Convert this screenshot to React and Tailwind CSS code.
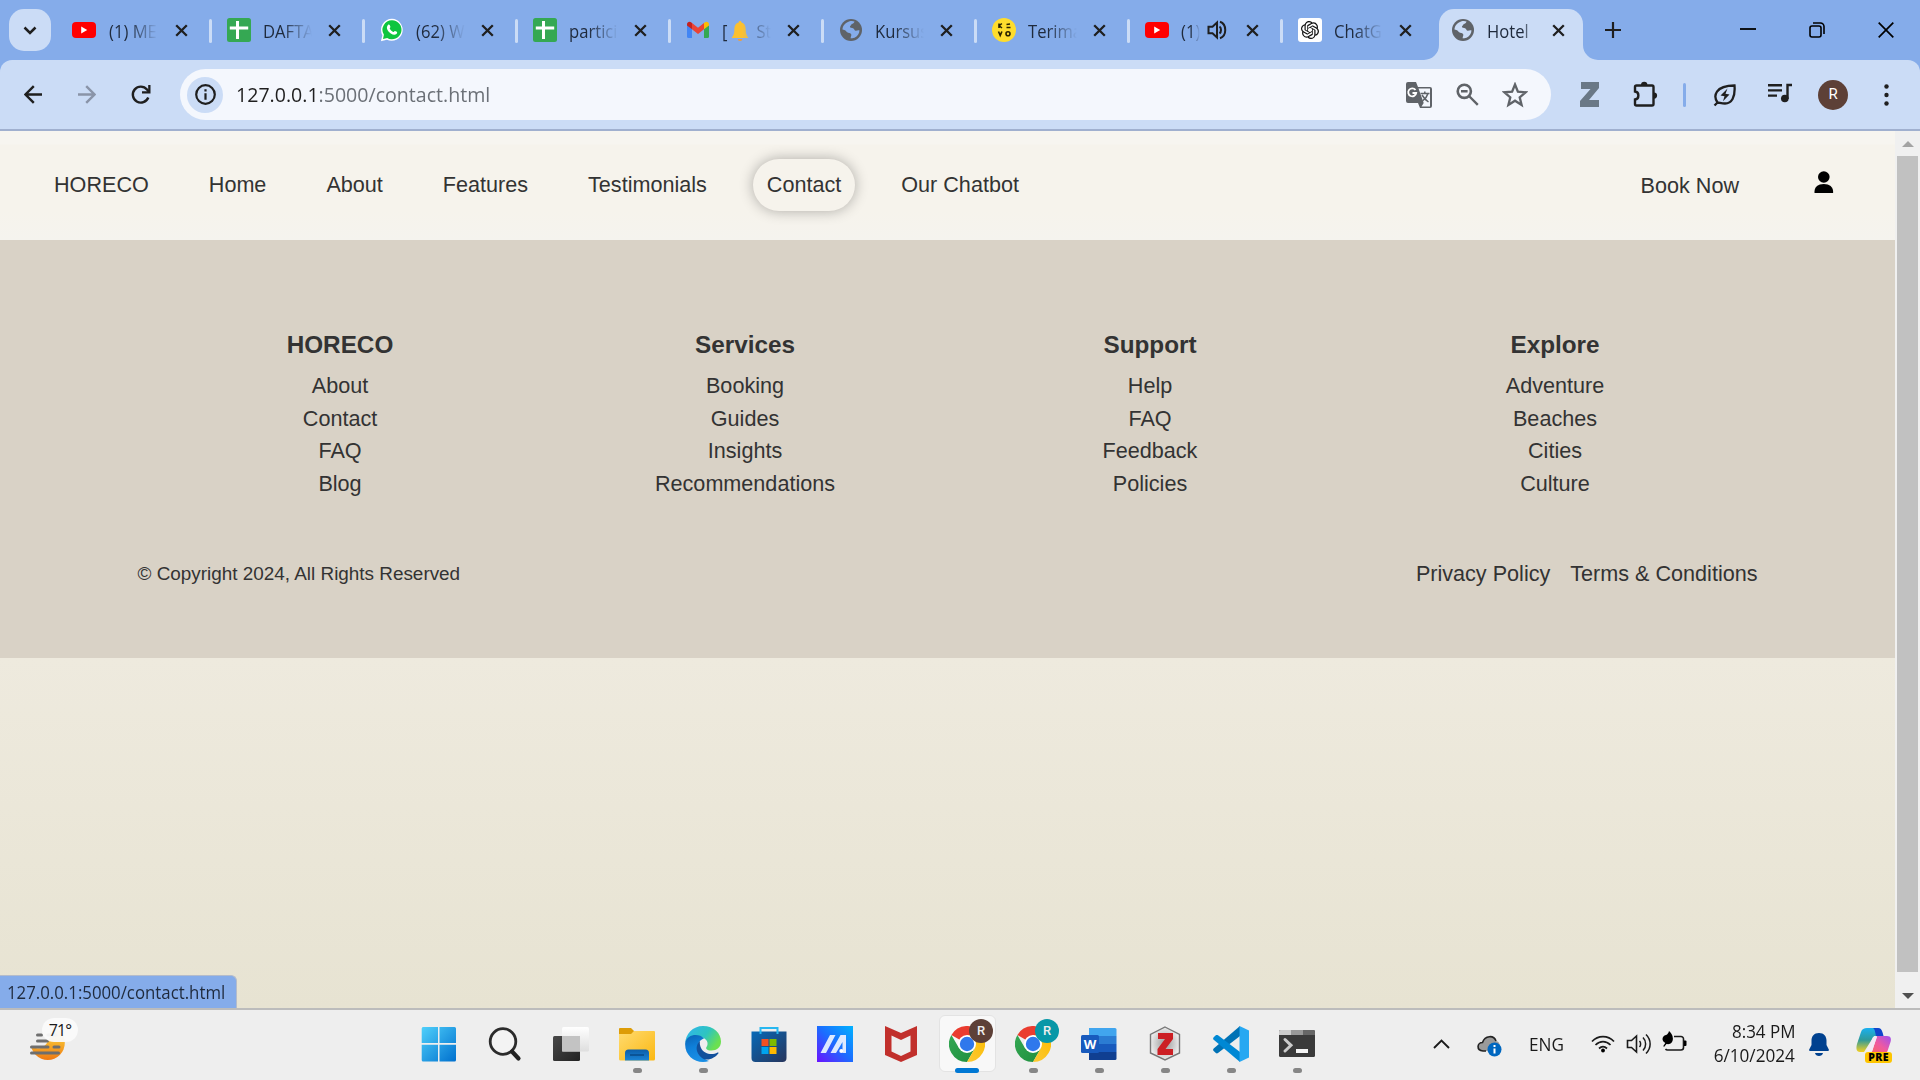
import React from "react";

const segoe = "font-['Open_Sans','Noto_Sans',sans-serif]";

const Close = () => (
  <svg width="13" height="13" viewBox="0 0 13 13" className="shrink-0"><path d="M1.2 1.2 11.8 11.8M11.8 1.2 1.2 11.8" stroke="#1f1f1f" strokeWidth="2.3" /></svg>
);
const YouTube = () => (
  <svg width="24" height="24" viewBox="0 0 24 24"><rect y="4" width="24" height="16" rx="4" fill="#f00" /><path d="M9.2 8.5v7l6-3.5z" fill="#fff" /></svg>
);
const Sheets = () => (
  <svg width="24" height="24" viewBox="0 0 24 24"><rect width="24" height="24" rx="2.5" fill="#35a853" /><path d="M10.500 3v18M2.800 10h18.400" stroke="#fff" strokeWidth="3" /></svg>
);
const WhatsApp = () => (
  <svg width="24" height="24" viewBox="0 0 24 24"><path d="M12 .8A11 11 0 0 0 2.400 17.200L.9 23.200l6-1.500A11 11 0 1 0 12 .8z" fill="#fff" /><path d="M12 2.300a9.500 9.500 0 0 0-8.100 14.500L3 21l4.200-1a9.500 9.500 0 1 0 4.800-17.700z" fill="#0ec53f" /><path d="M8 7c.5-.6 1.400-.6 1.700.1l.7 1.700c.2.5-.9 1.300-.7 1.800.7 1.500 1.900 2.700 3.500 3.400.6.200 1.200-1.300 1.800-1.100l1.800.9c.7.4.3 1.700-.4 2.200-1.500 1.100-3.600.7-5.600-.6-1.700-1.100-3.100-2.700-3.700-4.500C6.600 9.400 7.200 7.800 8 7z" fill="#fff" /></svg>
);
const Gmail = () => (
  <svg width="24" height="24" viewBox="0 0 24 24"><path d="M1 7v11.500A1.500 1.500 0 0 0 2.500 20H6V10.500z" fill="#4285f4" /><path d="M18 10.500V20h3.500a1.500 1.500 0 0 0 1.500-1.500V7z" fill="#34a853" /><path d="M1 6.500c0-2.500 2.600-3.400 4.400-2L6 5v6.300L1 7.500z" fill="#c5221f" /><path d="M23 6.500c0-2.500-2.600-3.400-4.400-2L18 5v6.300l5-3.800z" fill="#fbbc04" /><path d="M6 5l6 4.700L18 5v6.300l-6 4.600-6-4.600z" fill="#ea4335" /></svg>
);
const Globe = ({ land = "#85acea" }) => (
  <svg width="24" height="24" viewBox="0 0 24 24"><circle cx="12" cy="12" r="11" fill="#5f6368" /><path d="M10 3.500c2-.7 4-.6 5.500 0-.4 1.600-1.500 2.200-2.800 2.500-.3 1.400-1.600 1.600-1.800 2.700.1 1.200 1.900 1 3.200 1.500 1.500.7 1.200 2.400 2.700 2.600 1 .1 2-.8 3.700-.3-.2 3-2 6-5 7.300-1.700.6-2.500.6-3.700.6-.5-1.500.8-2.300.5-3.800-.5-1.800-3-1.300-4.500-2.600-1-1-1.200-2-4.300-2.400 0-3 2-6.600 6.500-8.100z" fill={land} /></svg>
);
const Smile = () => (
  <svg width="24" height="24" viewBox="0 0 24 24"><circle cx="12" cy="12" r="12" fill="#ffdd2d" /><g fill="none" stroke="#2a2300" strokeWidth="1.600"><path d="M7 5.500v4.500M7 8 9.800 5.500M7.500 8l2.500 2M14.500 6.500l3.500-.5M14.500 9.500h4M6.500 13.500l1.700 4 1.700-4" /><circle cx="16" cy="15.700" r="2" /></g></svg>
);
const OpenAI = () => (
  <svg width="24" height="24" viewBox="0 0 24 24"><rect width="24" height="24" rx="3" fill="#fff" /><g transform="translate(3 3) scale(.75)"><path fill="#111" d="M22.2819 9.8211a5.9847 5.9847 0 0 0-.5157-4.9108 6.0462 6.0462 0 0 0-6.5098-2.9A6.0651 6.0651 0 0 0 4.9807 4.1818a5.9847 5.9847 0 0 0-3.9977 2.9 6.0462 6.0462 0 0 0 .7427 7.0966 5.98 5.98 0 0 0 .511 4.9107 6.051 6.051 0 0 0 6.5146 2.9001A5.9847 5.9847 0 0 0 13.2599 24a6.0557 6.0557 0 0 0 5.7718-4.2058 5.9894 5.9894 0 0 0 3.9977-2.9001 6.0557 6.0557 0 0 0-.7475-7.0729zm-9.022 12.6081a4.4755 4.4755 0 0 1-2.8764-1.0408l.1419-.0804 4.7783-2.7582a.7948.7948 0 0 0 .3927-.6813v-6.7369l2.02 1.1686a.071.071 0 0 1 .038.052v5.5826a4.504 4.504 0 0 1-4.4945 4.4944zm-9.6607-4.1254a4.4708 4.4708 0 0 1-.5346-3.0137l.142.0852 4.783 2.7582a.7712.7712 0 0 0 .7806 0l5.8428-3.3685v2.3324a.0804.0804 0 0 1-.0332.0615L9.74 19.9502a4.4992 4.4992 0 0 1-6.1408-1.6464zM2.3408 7.8956a4.485 4.485 0 0 1 2.3655-1.9728V11.6a.7664.7664 0 0 0 .3879.6765l5.8144 3.3543-2.0201 1.1685a.0757.0757 0 0 1-.071 0l-4.8303-2.7865A4.504 4.504 0 0 1 2.3408 7.872zm16.5963 3.8558L13.1038 8.364 15.1192 7.2a.0757.0757 0 0 1 .071 0l4.8303 2.7913a4.4944 4.4944 0 0 1-.6765 8.1042v-5.6772a.79.79 0 0 0-.407-.667zm2.0107-3.0231l-.142-.0852-4.7735-2.7818a.7759.7759 0 0 0-.7854 0L9.409 9.2297V6.8974a.0662.0662 0 0 1 .0284-.0615l4.8303-2.7866a4.4992 4.4992 0 0 1 6.6802 4.66zM8.3065 12.863l-2.02-1.1638a.0804.0804 0 0 1-.038-.0567V6.0742a4.4992 4.4992 0 0 1 7.3757-3.4537l-.142.0805L8.704 5.459a.7948.7948 0 0 0-.3927.6813zm1.0976-2.3654l2.602-1.4998 2.6069 1.4998v2.9994l-2.5974 1.4997-2.6067-1.4997Z" /></g></svg>
);
const Bell = () => (
  <svg width="18" height="20" viewBox="0 0 18 20" className="mx-[4px] inline-block align-[-3px]"><path d="M9 0c1 0 1.500.7 1.500 1.600C14 2.500 15 5.500 15 9c0 3.500 1 5.500 3 8H0c2-2.500 3-4.500 3-8 0-3.500 1-6.500 4.500-7.400C7.500.7 8 0 9 0z" fill="#fcc02e" /><path d="M6.500 18h5a2.500 2 0 0 1-5 0z" fill="#f29d38" /></svg>
);
const Speaker = () => (
  <svg width="20" height="20" viewBox="0 0 20 20" className="shrink-0"><path d="M1.500 6.700v6.600h4L10 17.500v-15L5.500 6.700z" fill="none" stroke="#1f1f1f" strokeWidth="2" /><path d="M12.500 6.500c2 1.500 2 5.500 0 7M13 1.800c7 2.500 7 13.900 0 16.400" fill="none" stroke="#1f1f1f" strokeWidth="2" /></svg>
);

const tabs = [
  { icon: <YouTube />, title: "(1) ME" },
  { icon: <Sheets />, title: "DAFTA" },
  { icon: <WhatsApp />, title: "(62) W" },
  { icon: <Sheets />, title: "partici" },
  { icon: <Gmail />, title: <>[<Bell /> St</> },
  { icon: <Globe />, title: "Kursus" },
  { icon: <Smile />, title: "Terima" },
  { icon: <YouTube />, title: "(1)", sound: true },
  { icon: <OpenAI />, title: "ChatG" },
];

function TabBody({ icon, title, sound, last, first }) {
  return (
    <>
      <span className={first ? "-ml-[2px] mr-[1px] h-6 w-6 shrink-0" : "h-6 w-6 shrink-0"}>{icon}</span>
      <span className={sound
        ? "ml-[12px] mt-[2px] w-[19px] overflow-hidden whitespace-nowrap [mask-image:linear-gradient(to_right,#000_50%,transparent)]"
        : last ? "ml-[12px] mt-[2px] w-[44px] overflow-hidden whitespace-nowrap [mask-image:linear-gradient(to_right,#000_85%,transparent)]"
        : "ml-[12px] mt-[2px] w-[49px] overflow-hidden whitespace-nowrap [mask-image:linear-gradient(to_right,#000_40%,transparent)]"}>
        <span className="inline-block origin-left scale-x-[0.95]">{title}</span>
      </span>
      {sound && <span className="ml-[7px]"><Speaker /></span>}
    </>
  );
}

function TabStrip() {
  return (
    <div className={`flex h-[60px] bg-[#85acea] text-[17.500px] leading-6 text-[#1f2a3c] ${segoe}`}>
      <div className="ml-[9px] mt-[9px] flex h-[42px] w-[42px] shrink-0 items-center justify-center rounded-[15px] bg-[#cbdcf6]">
        <svg width="14" height="9" viewBox="0 0 14 9"><path d="M1.500 1.500 7 7l5.500-5.500" fill="none" stroke="#1f1f1f" strokeWidth="2.500" /></svg>
      </div>
      <div className="ml-[8px] flex shrink-0">
        {tabs.map((t, i) => (
          <div key={i} className="relative flex h-[60px] w-[153px] items-center pl-[15px]">
            <TabBody {...t} first={i === 0} />
            <span className="absolute left-[116px] top-[24px]"><Close /></span>
            <span className="absolute left-[150px] top-[19px] h-6 w-[3px] rounded-full bg-[#cbdcf6] data-[hide=true]:hidden" data-hide={i === 8} />
          </div>
        ))}
      </div>
      <div className="relative ml-[3px] mt-[9px] flex h-[51px] w-[144px] shrink-0 items-center rounded-t-[15px] bg-[#cbdcf6] pb-[9px] pl-[12px]">
        <svg className="absolute bottom-0 left-[-15px]" width="15" height="15"><path d="M15 0v15H0A15 15 0 0 0 15 0z" fill="#cbdcf6" /></svg>
        <svg className="absolute bottom-0 right-[-15px]" width="15" height="15"><path d="M0 0v15h15A15 15 0 0 1 0 0z" fill="#cbdcf6" /></svg>
        <TabBody icon={<Globe land="#cbdcf6" />} title="Hotel" last />
        <span className="absolute left-[113px] top-[15px]"><Close /></span>
      </div>
      <svg className="ml-[22px] mt-[22px]" width="16" height="16"><path d="M8 0v16M0 8h16" stroke="#1f1f1f" strokeWidth="2.200" /></svg>
      <div className="ml-auto mr-[26px] flex items-center gap-[53px]">
        <svg width="16" height="16"><path d="M0 7h16" stroke="#000" strokeWidth="1.800" /></svg>
        <svg width="16" height="16"><rect x="1" y="4" width="11" height="11" rx="2" fill="none" stroke="#000" strokeWidth="1.600" /><path d="M4 1h7.500a3.500 3.500 0 0 1 3.500 3.500V12" fill="none" stroke="#000" strokeWidth="1.600" /></svg>
        <svg width="16" height="16"><path d="M.7.7 15.300 15.300M15.300.7.7 15.300" stroke="#000" strokeWidth="1.700" /></svg>
      </div>
    </div>
  );
}

function Toolbar() {
  return (
    <div className="bg-[#85acea]">
      <div className={`flex h-[71px] items-center rounded-t-[12px] border-b-2 border-[#a0b0cf] bg-[#cbdcf6] ${segoe}`}>
        <svg className="ml-[24px]" width="19" height="19" viewBox="0 0 19 19"><path d="M18 9.500H2M9.800 1.200 1.500 9.500l8.300 8.300" fill="none" stroke="#1f1f1f" strokeWidth="2.400" /></svg>
        <svg className="ml-[34px]" width="19" height="19" viewBox="0 0 19 19"><path d="M1 9.500h16M9.200 1.200l8.300 8.300-8.300 8.300" fill="none" stroke="#8a94a8" strokeWidth="2.400" /></svg>
        <svg className="ml-[35px]" width="20" height="20" viewBox="0 0 20 20"><path d="M17.300 12.500A8 8 0 1 1 16 4.500l2 2.500" fill="none" stroke="#1f1f1f" strokeWidth="2.400" /><path d="M19.500 0v8.500H11V6.200h6.200V0z" fill="#1f1f1f" /></svg>
        <div className="ml-[29px] flex h-[51px] w-[1371px] items-center rounded-full bg-[#f4f7fd] pl-[7px]">
          <div className="flex h-[36px] w-[36px] items-center justify-center rounded-full bg-[#cbdcf6]">
            <svg width="21" height="21" viewBox="0 0 21 21"><circle cx="10.500" cy="10.500" r="9.300" fill="none" stroke="#1f1f1f" strokeWidth="2.200" /><path d="M10.500 9.300v6.400M10.500 5.300v2.300" stroke="#1f1f1f" strokeWidth="2.200" /></svg>
          </div>
          <div className="mb-[2px] ml-[13px] w-[260px] whitespace-nowrap text-[20.500px] leading-8 text-[#6b7077]"><span className="inline-block origin-left scale-x-[0.955]"><span className="text-[#1f1f1f]">127.0.0.1</span>:5000/contact.html</span></div>
          <svg className="ml-auto" width="26" height="26" viewBox="0 0 26 26"><path d="M2 0h8l2 5h12a2 2 0 0 1 2 2v17a2 2 0 0 1-2 2H14l-2-5H2a2 2 0 0 1-2-2V2a2 2 0 0 1 2-2z" fill="#5f6368" /><path d="M12.500 6.500H24v18h-8.500l2.200-3.500z" fill="#f4f7fd" /><path d="M14.500 11.500h9M18.800 9.500v2M22 11.500c-1 3.500-3 5.500-5.500 7.500M16 13c1.500 2.500 3.500 5 6.500 7" stroke="#5f6368" strokeWidth="1.500" fill="none" /><path d="M9.500 8A4 4 0 1 0 10.200 11H6.500" stroke="#fff" strokeWidth="1.800" fill="none" /></svg>
          <svg className="ml-[24px]" width="23" height="23" viewBox="0 0 23 23"><circle cx="8.300" cy="8.300" r="6.600" fill="none" stroke="#5f6368" strokeWidth="2.600" /><path d="M13 13l8.800 8.800M5 8.300h6.600" stroke="#5f6368" strokeWidth="2.400" /></svg>
          <svg className="ml-[23px] mr-[23px]" width="26" height="26" viewBox="0 0 26 26"><path d="M13 2.500l2.900 7.200 7.700.6-5.900 5 1.900 7.600-6.600-4.200-6.600 4.200 1.900-7.600-5.900-5 7.700-.6z" fill="none" stroke="#5f6368" strokeWidth="2.300" /></svg>
        </div>
        <svg className="ml-[29px]" width="20" height="25" viewBox="0 0 20 25"><path d="M1 0h18v6L9 18h10v7H0v-6L10.500 7H1z" fill="#6a7886" /></svg>
        <svg className="ml-[32px] mb-[3px]" width="27" height="27" viewBox="0 0 27 27"><path d="M4.500 5.500H20a1.500 1.500 0 0 1 1.500 1.500v17a1.500 1.500 0 0 1-1.500 1.500H4.500A1.500 1.500 0 0 1 3 24v-4.500c4.500-.5 4.500-7.500 0-8V7a1.500 1.500 0 0 1 1.500-1.500z" fill="none" stroke="#1f1f1f" strokeWidth="2.400" /><path d="M9 5a3 3 0 1 1 6.400 0zM22 12.500a3 3 0 1 1 0 6.200z" fill="#1f1f1f" /></svg>
        <span className="ml-[24px] h-6 w-[3px] rounded-full bg-[#85acea]" />
        <svg className="ml-[27px]" width="24" height="24" viewBox="0 0 24 24"><path d="M1.500 22.500 4.500 19.500M4.500 19.500C0 13 2 2.500 21.500 2.500c1 12-3 18-9.500 18-3 0-5.500-.8-7.500-1z" fill="none" stroke="#1f1f1f" strokeWidth="2.300" /><path d="M14.500 5.500 7.500 12.500l4 .8-1.500 5 6.500-6.800-4-.8z" fill="#1f1f1f" /></svg>
        <svg className="ml-[31px] mb-[3px]" width="25" height="20" viewBox="0 0 25 20"><path d="M0 2.200h14M0 7.400h14M0 12.600h9M19.500 16V2H24" fill="none" stroke="#1f1f1f" strokeWidth="2.400" /><circle cx="16.800" cy="15.500" r="3.800" fill="#1f1f1f" /></svg>
        <div className="ml-[25px] flex h-[30px] w-[30px] items-center justify-center rounded-full bg-[#5d4037] font-[Roboto,sans-serif] text-[15px] text-white">R</div>
        <svg className="ml-[36px]" width="5" height="22"><g fill="#1f1f1f"><circle cx="2.500" cy="2.500" r="2.200" /><circle cx="2.500" cy="11" r="2.200" /><circle cx="2.500" cy="19.500" r="2.200" /></g></svg>
      </div>
    </div>
  );
}

const columns = [
  ["HORECO", "About", "Contact", "FAQ", "Blog"],
  ["Services", "Booking", "Guides", "Insights", "Recommendations"],
  ["Support", "Help", "FAQ", "Feedback", "Policies"],
  ["Explore", "Adventure", "Beaches", "Cities", "Culture"],
];

function Page() {
  return (
    <div className="flex h-[877px] bg-[#f0f0f0] font-['Liberation_Sans',Arial,sans-serif] text-[21.600px] text-[#333]">
      <div className="relative flex w-[1895px] flex-col">
        <nav className="flex h-[109px] items-start bg-[linear-gradient(#f7f5f0_0,#f7f5f0_13px,#f6f3ec_14px,#f6f3ec_80px,#f5f3ee_100%)] pl-[40.500px] pt-[28px] leading-[52px]">
          {["HORECO", "Home", "About", "Features", "Testimonials", "Contact", "Our Chatbot"].map((n) => (
            <a key={n} className={n === "Contact" ? "mr-[33px] h-[52px] rounded-[27px] bg-[#f6f3ec] px-[13.500px] shadow-[0_0_14px_rgba(0,0,0,0.3)]" : "mr-[33px] h-[52px] px-[13.500px]"}>{n}</a>
          ))}
          <a className="ml-auto mt-[1px]">Book Now</a>
          <svg className="ml-[75px] mr-[61px] mt-[12px]" width="20" height="22" viewBox="0 0 20 22"><circle cx="9.800" cy="6" r="5.800" /><path d="M.5 22v-1.500C.5 16 4 13 9.800 13s9.300 3 9.300 7.500V22z" /></svg>
        </nav>
        <footer className="flex h-[418px] flex-col bg-[#d9d2c6] px-[137.500px] pt-[88px]">
          <div className="grid grid-cols-4 text-center leading-[32.700px]">
            {columns.map(([h, ...links]) => (
              <div key={h}>
                <h3 className="mb-[8px] text-[24.300px] font-bold leading-[34px]">{h}</h3>
                {links.map((l) => <div key={l}>{l}</div>)}
              </div>
            ))}
          </div>
          <div className="mt-[60px] flex items-center justify-between leading-[26px]">
            <span className="text-[18.900px]">© Copyright 2024, All Rights Reserved</span>
            <span className="flex gap-[20px]"><a>Privacy Policy</a><a>Terms &amp; Conditions</a></span>
          </div>
        </footer>
        <div className="flex-1 bg-[linear-gradient(#eeeade,#e7e3d2)]" />
        <div className={`absolute bottom-0 left-0 h-[33px] w-[237px] whitespace-nowrap rounded-tr-[6px] border-r border-t border-[#b4bccb] bg-[#85acea] pl-[7px] text-[17.500px] leading-[32px] text-[#1f2a3c] ${segoe}`}><span className="inline-block origin-left scale-x-[0.96]">127.0.0.1:5000/contact.html</span></div>
      </div>
      <div className="flex w-[25px] flex-col items-center">
        <svg className="mt-[10px]" width="12" height="6"><path d="M0 6 6 0l6 6z" fill="#a3a3a3" /></svg>
        <div className="mt-[9px] h-[816px] w-[21px] bg-[#c1c1c1]" />
        <svg className="mt-[21px]" width="12" height="6"><path d="M0 0h12L6 6z" fill="#505050" /></svg>
      </div>
    </div>
  );
}

function ChromeLogo({ color, id }) {
  return (
    <div className="relative h-9 w-9">
      <svg width="36" height="36" viewBox="0 0 36 36">
        <defs>
          <linearGradient id={`${id}g`} x1="0" y1="0" x2="1" y2="1"><stop offset="0" stopColor="#34a853" /><stop offset="1" stopColor="#1e8e3e" /></linearGradient>
          <linearGradient id={`${id}y`} x1="0" y1="1" x2="1" y2="0"><stop offset="0" stopColor="#fcc934" /><stop offset="1" stopColor="#fbbc04" /></linearGradient>
        </defs>
        <path d="M18 18 2.400 9A18 18 0 0 1 33.600 9H18z" fill="#ea3c2f" />
        <path d="M2.400 9A18 18 0 0 0 18 36l7.800-13.500L10.200 22.500z" fill={`url(#${id}g)`} />
        <path d="M33.600 9A18 18 0 0 1 18 36l7.800-13.500L18 9z" fill={`url(#${id}y)`} />
        <circle cx="18" cy="18" r="9" fill="#fff" /><circle cx="18" cy="18" r="7.200" fill="#2f78ec" />
      </svg>
      <div className="absolute left-[20px] top-[-7px] flex h-6 w-6 items-center justify-center rounded-full font-[Roboto,sans-serif] text-[13px] font-medium text-[#eee]" style={{ backgroundColor: color }}>R</div>
    </div>
  );
}

const apps = [
  { icon: <svg width="36" height="36" viewBox="0 0 36 36"><defs><linearGradient id="win" x1="0" y1="0" x2="1" y2="1"><stop offset="0" stopColor="#4fd0fb" /><stop offset="1" stopColor="#0070ce" /></linearGradient></defs><path d="M2 1h15v16H.7V2.500A1.500 1.500 0 0 1 2 1zm16.500 0h15A1.500 1.500 0 0 1 35 2.500V17H18.500zM.7 18.700H17V35.500H2.200A1.500 1.500 0 0 1 .7 34zm17.800 0H35V34a1.500 1.500 0 0 1-1.500 1.500h-15z" fill="url(#win)" /></svg> },
  { icon: <svg width="36" height="36" viewBox="0 0 36 36"><circle cx="16" cy="15.500" r="12.800" fill="#f3f3f3" stroke="#2b2b2b" strokeWidth="2.800" /><path d="M25 25.500l6.500 7" stroke="#222" strokeWidth="4.200" strokeLinecap="round" /></svg> },
  { icon: <svg width="36" height="36" viewBox="0 0 36 36"><defs><linearGradient id="tv" x1="0" y1="0" x2="0" y2="1"><stop offset="0" stopColor="#fff" /><stop offset="1" stopColor="#dedede" /></linearGradient><linearGradient id="td" x1="0" y1="0" x2="1" y2="1"><stop offset="0" stopColor="#484848" /><stop offset="1" stopColor="#222" /></linearGradient></defs><rect y="10" width="27" height="25" rx="1.500" fill="url(#td)" /><rect x="9" y="1" width="27" height="24.500" rx="1.500" fill="url(#tv)" /><path d="M9 10h18v15.500H9z" fill="#c3c3c3" /></svg> },
  { dot: true, icon: <svg width="36" height="36" viewBox="0 0 36 36"><defs><linearGradient id="fo" x1="0" y1="0" x2="1" y2="1"><stop offset="0" stopColor="#ffdb70" /><stop offset="1" stopColor="#fbb812" /></linearGradient><linearGradient id="fb" x1="0" y1="0" x2="0" y2="1"><stop offset="0" stopColor="#0c5da8" /><stop offset="1" stopColor="#1a84d6" /></linearGradient></defs><path d="M0 3a1 1 0 0 1 1-1h11l3.500 3.500L12 9H0z" fill="#dd9c07" /><path d="M0 8h12l3-3h20a1 1 0 0 1 1 1v27a1.500 1.500 0 0 1-1.500 1.500h-33A1.500 1.500 0 0 1 0 33z" fill="url(#fo)" /><path d="M6 34.500V27a3.500 3.500 0 0 1 3.500-3.500h17A3.500 3.500 0 0 1 30 27v7.500z" fill="url(#fb)" /><path d="M11 29h14" stroke="#0a4d8c" strokeWidth="1.600" /></svg> },
  { dot: true, icon: <svg width="36" height="36" viewBox="0 0 36 36"><defs><linearGradient id="eg" x1="0" y1="0" x2="1" y2=".5"><stop offset="0" stopColor="#30b4f0" /><stop offset=".6" stopColor="#2ec4c0" /><stop offset="1" stopColor="#6be050" /></linearGradient><linearGradient id="eb" x1="0" y1="0" x2=".3" y2="1"><stop offset="0" stopColor="#0b62b4" /><stop offset=".5" stopColor="#0f80da" /><stop offset="1" stopColor="#1a8ee4" /></linearGradient></defs><path d="M18 0c11 0 18 7.500 18 15.500 0 6-4.500 9-9.500 9-5 0-6-2-5-3.500 2.500-3.500.5-8-4-9.500C9 9 1 12 .3 18 0 8 8 0 18 0z" fill="url(#eg)" /><path d="M.2 17C2 8 14 7 19 12.500c-4 1-6.500 5-6 9.500C14 29 19 33.500 24 35c-12 3.800-24.800-4.500-23.800-18z" fill="url(#eb)" /><path d="M15 15c-5 4.500-4.500 12 2 17 5.500 4 13.500-.5 16.300-4.500.5-.8 0-1.300-.8-1C27 29.500 19 28 16 22c-1-2.500-1.500-4.500-1-7z" fill="#12509c" /></svg> },
  { icon: <svg width="36" height="36" viewBox="0 0 36 36"><defs><linearGradient id="st" x1="0" y1="0" x2="1" y2="1"><stop offset="0" stopColor="#0669b8" /><stop offset="1" stopColor="#27355c" /></linearGradient></defs><path d="M.5 5.500h35V32a4 4 0 0 1-4 4h-27a4 4 0 0 1-4-4z" fill="url(#st)" /><path d="M9.500 8V2h17v6" fill="none" stroke="#27b7f0" strokeWidth="2" /><path d="M10.500 13h7v7h-7z" fill="#f25022" /><path d="M18.500 13h7v7h-7z" fill="#7fba00" /><path d="M10.500 21h7v7h-7z" fill="#00a4ef" /><path d="M18.500 21h7v7h-7z" fill="#ffb900" /></svg> },
  { icon: <svg width="36" height="36" viewBox="0 0 36 36"><defs><linearGradient id="ma" x1="0" y1="1" x2="1" y2="0"><stop offset="0" stopColor="#6a12ff" /><stop offset=".5" stopColor="#1c6cff" /><stop offset="1" stopColor="#00b2ff" /></linearGradient></defs><path d="M0 0h36v36H0z" fill="url(#ma)" /><path d="M13 9h5.500L9 27H3.500zM23.500 9H29v18h-3.500V16L19 27h-5.500z" fill="#dde9ff" /><circle cx="24.300" cy="25" r="2" fill="#fff" /></svg> },
  { icon: <svg width="36" height="36" viewBox="0 0 36 36"><path d="M2 0l16 7 16-7v29l-16 7-16-7zM8.500 9.500v16l9.500 4.500 9.500-4.500v-16L18 14z" fill="#c1302c" fillRule="evenodd" /></svg> },
  { active: true, icon: <ChromeLogo color="#5d4037" id="ca" /> },
  { dot: true, icon: <ChromeLogo color="#0797a7" id="cb" /> },
  { dot: true, icon: <svg width="36" height="36" viewBox="0 0 36 36"><path d="M8 2h26a1.500 1.500 0 0 1 1.500 1.500V10H8z" fill="#41a5ee" /><path d="M8 10h27.500v8H8z" fill="#2b7cd3" /><path d="M8 18h27.500v8H8z" fill="#185abd" /><path d="M8 26h27.500v6.500A1.500 1.500 0 0 1 34 34H8z" fill="#103f91" /><rect y="9" width="18" height="18" rx="1.500" fill="#185abd" /><text x="9" y="23" textAnchor="middle" fontFamily="Open Sans, sans-serif" fontWeight="700" fontSize="13" fill="#fff">W</text></svg> },
  { dot: true, icon: <svg width="36" height="36" viewBox="0 0 36 36"><defs><radialGradient id="zo"><stop offset="0" stopColor="#999" /><stop offset="1" stopColor="#ececec" /></radialGradient></defs><path d="M18 1l14.500 7.500v18.500L18 34 3.500 27V8.500z" fill="url(#zo)" stroke="#777" strokeWidth="1.400" /><path d="M11 7h15v6l-7.500 10H26v6H10.500v-6L18 13h-7z" fill="#cc1f24" /></svg> },
  { dot: true, icon: <svg width="36" height="36" viewBox="0 0 36 36"><path d="M27 0v10L5 27c-.8.600-1.600.500-2.200 0L.7 25c-.8-.8-.8-1.800 0-2.600z" fill="#0072b5" /><path d="M27 36V26L5 9.300c-.8-.6-1.600-.5-2.200 0L.7 11.200c-.8.800-.8 1.800 0 2.600z" fill="#0088d4" /><path d="M26.500 0 36 4.500v27L26.500 36z" fill="#27a8f2" /></svg> },
  { dot: true, icon: <svg width="36" height="36" viewBox="0 0 36 36"><rect y="4" width="36" height="27" rx="1.500" fill="#3a3a3a" /><path d="M0 9V5.500A1.500 1.500 0 0 1 1.500 4H12v5z" fill="#ccc" /><path d="M12 4h12v5H12z" fill="#999" /><path d="M24 4h10.500A1.500 1.500 0 0 1 36 5.500V9H24z" fill="#666" /><path d="M6 13.500l6 5.800-6 5.700" fill="none" stroke="#ccc" strokeWidth="3" strokeLinecap="round" /><path d="M17 23h12v4H17z" fill="#f4f4f4" /></svg> },
];

function Taskbar() {
  return (
    <div className={`relative flex h-[72px] border-t-2 border-[#bcbcbc] bg-[#eee] text-[#1a1a1a] ${segoe}`}>
      <div className="relative ml-[30px] mt-[8px] h-[44px] w-[50px]">
        <svg className="absolute left-0 top-[4px]" width="36" height="40" viewBox="0 0 36 40"><defs><linearGradient id="sun" x1="0" y1="0" x2="0" y2="1"><stop offset="0" stopColor="#fbd25e" /><stop offset=".5" stopColor="#f6b22c" /><stop offset="1" stopColor="#f07912" /></linearGradient></defs><circle cx="17.800" cy="21" r="17" fill="url(#sun)" /><path d="M0 0h26c-5 6-3 12-8 19-3 7-10 9-14 6H0z" fill="#eee" /><path d="M7.500 13h4M18 13h8M7.500 19h10M1.500 25H18M24 25h5M1.500 31h27" stroke="#6e6e6e" strokeWidth="3" strokeLinecap="round" /></svg>
        <div className="absolute left-[12px] top-0 flex h-6 w-9 items-center justify-center rounded-full bg-[#fafafa]/95 text-[16px] tracking-[-0.8px]">71°</div>
      </div>
      <div className="ml-[326px] flex">
        {apps.map((a, i) => (
          <div key={i} className="flex w-[66px] flex-col items-center">
            <div className={a.active ? "mt-[5px] flex h-[57px] w-[57px] items-start justify-center rounded-[6px] border border-[#e3e3e3] bg-[#f8f8f8] pt-[10px]" : "mt-[5px] flex h-[57px] w-[57px] items-start justify-center pt-[11px]"}>{a.icon}</div>
            {a.active && <span className="mt-[-4px] h-[5px] w-6 rounded-full bg-[#0078d4]" />}
            {a.dot && <span className="mt-[-4px] h-[5px] w-[9px] rounded-full bg-[#868686]" />}
          </div>
        ))}
      </div>
      <div className="ml-auto flex items-center">
        <svg className="mb-[2px]" width="17" height="10"><path d="M1 9l7.500-7.500L16 9" fill="none" stroke="#1a1a1a" strokeWidth="1.900" /></svg>
        <svg className="ml-[27px] mt-[1px]" width="25" height="22" viewBox="0 0 25 22"><path d="M6 16C-1 15.500 0 7.500 5.500 7.500 8 0 17 0 19 6c4 .5 4 5 3 6L10 16z" fill="#9a9a9a" /><path d="M9 16H6C-1 15.500 0 7.500 5.500 7.500 8 0 17 0 19 6" fill="none" stroke="#222" strokeWidth="1.600" /><circle cx="17.500" cy="14.500" r="7" fill="#0067c0" /><path d="M17.500 13.500v5M17.500 10v2" stroke="#fff" strokeWidth="2" /></svg>
        <span className="mb-[2px] ml-[27px] w-[35px] text-[17.500px]"><span className="inline-block origin-left scale-x-[0.98]">ENG</span></span>
        <svg className="ml-[27px] mb-[3px]" width="24" height="18" viewBox="0 0 24 18"><path d="M1 6.500C7 0 17 0 23 6.500M4.500 10c4.500-4.500 10.500-4.500 15 0M8 13.500c2.500-2.300 5.500-2.300 8 0" fill="none" stroke="#1a1a1a" strokeWidth="1.700" /><circle cx="12" cy="15.500" r="1.900" /></svg>
        <svg className="ml-[11px] mb-[3px]" width="26" height="22" viewBox="0 0 26 22"><path d="M1.500 7.500v7h4L10.500 19V3L5.500 7.500z" fill="none" stroke="#1a1a1a" strokeWidth="1.600" /><path d="M13.500 8c1.500 1.500 1.500 4.500 0 6M17 4.500c3.500 3.500 3.500 9.500 0 13M20 1.500c5.500 5.500 5.500 13.500 0 19" fill="none" stroke="#1a1a1a" strokeWidth="1.500" /></svg>
        <svg className="ml-[10px] mb-[7px]" width="25" height="22" viewBox="0 0 25 22"><path d="M12 5.500h7a2.500 2.500 0 0 1 2.500 2.500v8.500A2.500 2.500 0 0 1 19 19H5.500a2.500 2.500 0 0 1-2-1" fill="none" stroke="#1a1a1a" strokeWidth="1.600" /><path d="M22 9.500h1.500a1 1 0 0 1 1 1V14a1 1 0 0 1-1 1H22z" /><path d="M7 0c2 2 5 5 3.500 10-1 3-4 3.500-6 3L2 16l-.7-1 2-3C-1 10 0 5 4 4c1.500-.5 2.500-2 3-4z" /></svg>
        <div className="mb-[4px] ml-[24px] flex w-[84px] flex-col items-end whitespace-nowrap text-[17.500px] leading-6"><span className="origin-right scale-x-[0.97]">8:34 PM</span><span className="origin-right scale-x-[0.98]">6/10/2024</span></div>
        <svg className="ml-[14px] mb-[1px]" width="20" height="24" viewBox="0 0 20 24"><path d="M10 0c5 0 7.500 3.500 7.500 7.500V12l2.300 4.500c.3.800 0 1.500-.8 1.500H1c-.8 0-1.100-.7-.8-1.500L2.500 12V7.500C2.500 3.500 5 0 10 0zM6 20h8c-.5 4-7.500 4-8 0z" fill="#00418f" /></svg>
        <div className="relative ml-[27px] mr-[28px] h-9 w-9">
          <svg width="36" height="36" viewBox="0 0 36 36"><defs><linearGradient id="c1" x1="0" y1="0" x2="0" y2="1"><stop offset="0" stopColor="#1ab0f0" /><stop offset=".5" stopColor="#2f9a9a" /><stop offset="1" stopColor="#f5d020" /></linearGradient><linearGradient id="c2" x1="0" y1="1" x2="1" y2="0"><stop offset="0" stopColor="#fb6a5c" /><stop offset=".5" stopColor="#ef5aa0" /><stop offset="1" stopColor="#a050f0" /></linearGradient></defs><path d="M21 1c4 0 4.500 3 6 8h-9L8 25H4c-4 0-4-4-3-8L5 5c1-3 3-4 6-4z" fill="url(#c1)" /><path d="M17 1h5c3.500 0 4.500 3.500 5.500 8H20c-1-4-1-7-3-8z" fill="#1144cc" /><path d="M21 9h10c4 0 4.500 3 3.500 6l-3 9c-1 2-2 3-4 3H13c3-1 3.500-3 4.500-7z" fill="url(#c2)" /><path d="M17 10h4l-5 14h-5z" fill="#f5e9f5" /></svg>
          <div className="absolute left-[9px] top-[25px] flex h-[11px] w-[27px] items-center justify-center rounded-[3px] bg-[#fdc500] text-[10.500px] font-extrabold leading-none tracking-[0.3px] text-black">PRE</div>
        </div>
      </div>
    </div>
  );
}

export default function App() {
  return (
    <div className="h-[1080px] w-[1920px] overflow-hidden">
      <TabStrip />
      <Toolbar />
      <Page />
      <Taskbar />
    </div>
  );
}
